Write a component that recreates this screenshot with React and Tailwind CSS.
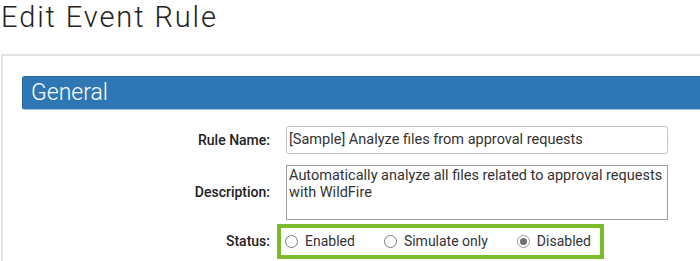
import React from 'react';

const Radio = ({ label, checked }) => (
  <label className="flex items-center gap-[7px] whitespace-nowrap shrink-0">
    <span
      className={`w-[13px] h-[13px] rounded-full border flex items-center justify-center bg-white ${
        checked ? 'border-[#9a9a9a]' : 'border-[#7a7a7a]'
      }`}
    >
      {checked && <span className="w-[7px] h-[7px] rounded-full bg-[#6f6f6f]" />}
    </span>
    <span>{label}</span>
  </label>
);

export default function App() {
  return (
    <div
      className="w-[700px] h-[261px] overflow-hidden bg-white text-[#333]"
      style={{ fontFamily: 'Roboto, "Liberation Sans", sans-serif' }}
    >
      {/* Title */}
      <h1 className="pl-[1px] pt-[1px] text-[29px] leading-[32px] font-light tracking-[1.9px] text-[#222]">
        Edit Event Rule
      </h1>

      {/* Panel */}
      <div className="mt-[21px] ml-[1px] w-[760px] border-2 border-[#e3e3e3] pl-[19px] pt-[20px] pb-4">
        <div className="h-[34px] rounded-l-[3px] bg-[#2e77b4] border border-[#2868a0] border-b-[#9cc4e6] pl-[8px] flex items-center text-white text-[23px] font-light">
          General
        </div>

        <div className="grid grid-cols-[248px_382px] gap-x-4 mt-[16px] text-[14.5px]">
          {/* Rule Name */}
          <div className="flex items-center justify-end text-[14px] font-medium text-[#222]">Rule Name:</div>
          <div className="h-[28px] border border-[#c4c4c4] rounded-[3px] px-[2px] flex items-center">
            [Sample] Analyze files from approval requests
          </div>

          {/* Description */}
          <div className="mt-[11px] flex items-center justify-end text-[14px] font-medium text-[#222]">Description:</div>
          <div className="mt-[11px] h-[55px] border border-[#9e9e9e] px-[2px] leading-[17px] pt-[1px]">
            Automatically analyze all files related to approval requests with WildFire
          </div>

          {/* Status */}
          <div className="mt-[4px] flex items-center justify-end text-[14px] font-medium text-[#222]">Status:</div>
          <div className="mt-[4px] -ml-[9px] w-[327px] h-[35px] border-4 border-[#7cbc2c] flex items-center pl-[4px] text-[14px]">
            <Radio label="Enabled" />
            <div className="w-[29px] shrink-0" />
            <Radio label="Simulate only" />
            <div className="w-[29px] shrink-0" />
            <Radio label="Disabled" checked />
          </div>
        </div>
      </div>
    </div>
  );
}
